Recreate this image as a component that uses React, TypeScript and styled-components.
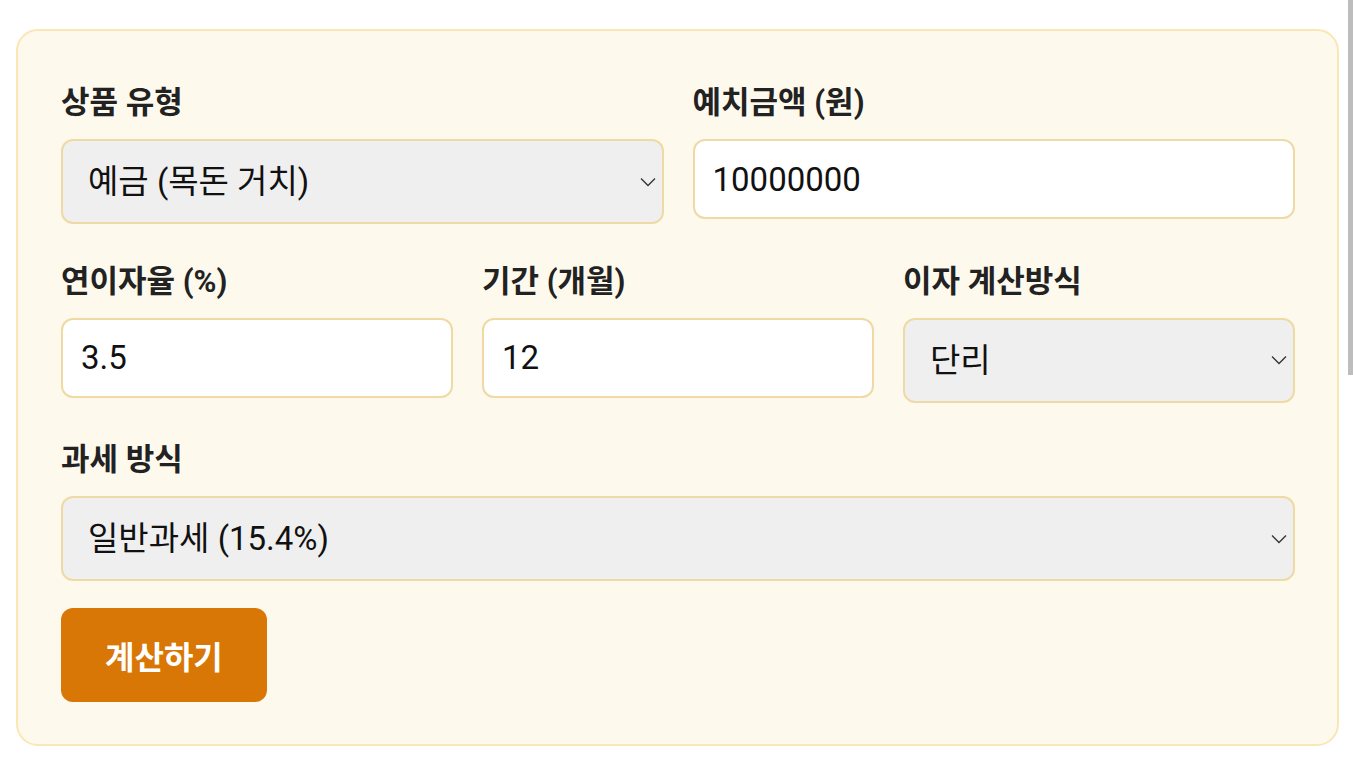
import React from "react";
import styled, { createGlobalStyle } from "styled-components";

const Global = createGlobalStyle`
  html, body { margin: 0; padding: 0; background: #ffffff; }
  body { font-family: Roboto, "Noto Sans CJK KR", sans-serif; color: #1f1f1f; }
  * { box-sizing: border-box; }
`;

const Page = styled.div`
  padding: 29px 14px 23px 16px;
`;

const Card = styled.form`
  border: 2px solid #fbe6b6;
  border-radius: 22px;
  background: #fef9ed;
  padding: 50px 42px 42px 43px;
`;

const Fields = styled.div`
  display: flex;
  flex-direction: column;
  gap: 35.5px;
`;

const Row = styled.div<{ $cols: number }>`
  display: grid;
  grid-template-columns: repeat(${(p) => p.$cols}, 1fr);
  column-gap: 29px;
  align-items: start;
`;

const Field = styled.div`
  display: flex;
  flex-direction: column;
`;

const Label = styled.label`
  font-size: 31px;
  font-weight: 700;
  color: #222222;
  line-height: 44px;
  margin-bottom: 14px;
`;

const Input = styled.input`
  height: 80px;
  width: 100%;
  border: 2px solid #efd9a5;
  border-radius: 12px;
  background: #ffffff;
  padding: 0 18px;
  font-family: Roboto, "Noto Sans CJK KR", sans-serif;
  font-size: 33px;
  color: #111111;
  outline: none;
`;

const SelectWrap = styled.div`
  position: relative;
  width: 100%;
`;

const Select = styled.select`
  appearance: none;
  -webkit-appearance: none;
  display: block;
  height: 85px;
  width: 100%;
  border: 2px solid #efd9a5;
  border-radius: 12px;
  background-color: #efefef;
  padding: 0 40px 0 25px;
  font-family: Roboto, "Noto Sans CJK KR", sans-serif;
  font-size: 33px;
  color: #111111;
  outline: none;
`;

const Chevron = styled.svg`
  position: absolute;
  right: 8px;
  top: 50%;
  width: 16px;
  height: 10px;
  margin-top: -5px;
  pointer-events: none;
`;

const ButtonRow = styled.div`
  display: flex;
  margin-top: 27px;
`;

const Button = styled.button`
  height: 94px;
  padding: 0 44px;
  border: none;
  border-radius: 12px;
  background: #d97706;
  color: #ffffff;
  font-family: Roboto, "Noto Sans CJK KR", sans-serif;
  font-size: 32px;
  font-weight: 700;
  cursor: pointer;
`;

const ScrollThumb = styled.div`
  position: fixed;
  top: 0;
  right: 0;
  width: 5px;
  height: 375px;
  background: #bdbdbd;
`;

type Opt = { value: string; label: string };

function DropDown({ value, options }: { value: string; options: Opt[] }) {
  return (
    <SelectWrap>
      <Select defaultValue={value}>
        {options.map((o) => (
          <option key={o.value} value={o.value}>
            {o.label}
          </option>
        ))}
      </Select>
      <Chevron viewBox="0 0 16 10" fill="none">
        <path d="M1 1.5 L8 8.5 L15 1.5" stroke="#333333" strokeWidth="1.3" />
      </Chevron>
    </SelectWrap>
  );
}

export default function App() {
  return (
    <>
      <Global />
      <Page>
        <Card onSubmit={(e) => e.preventDefault()}>
          <Fields>
            <Row $cols={2}>
              <Field>
                <Label>상품 유형</Label>
                <DropDown
                  value="deposit"
                  options={[
                    { value: "deposit", label: "예금 (목돈 거치)" },
                    { value: "savings", label: "적금 (매월 납입)" },
                  ]}
                />
              </Field>
              <Field>
                <Label>예치금액 (원)</Label>
                <Input type="text" defaultValue="10000000" />
              </Field>
            </Row>
            <Row $cols={3}>
              <Field>
                <Label>연이자율 (%)</Label>
                <Input type="text" defaultValue="3.5" />
              </Field>
              <Field>
                <Label>기간 (개월)</Label>
                <Input type="text" defaultValue="12" />
              </Field>
              <Field>
                <Label>이자 계산방식</Label>
                <DropDown
                  value="simple"
                  options={[
                    { value: "simple", label: "단리" },
                    { value: "compound", label: "월복리" },
                  ]}
                />
              </Field>
            </Row>
            <Row $cols={1}>
              <Field>
                <Label>과세 방식</Label>
                <DropDown
                  value="normal"
                  options={[
                    { value: "normal", label: "일반과세 (15.4%)" },
                    { value: "reduced", label: "세금우대 (9.5%)" },
                    { value: "free", label: "비과세" },
                  ]}
                />
              </Field>
            </Row>
          </Fields>
          <ButtonRow>
            <Button type="submit">계산하기</Button>
          </ButtonRow>
        </Card>
      </Page>
      <ScrollThumb />
    </>
  );
}
